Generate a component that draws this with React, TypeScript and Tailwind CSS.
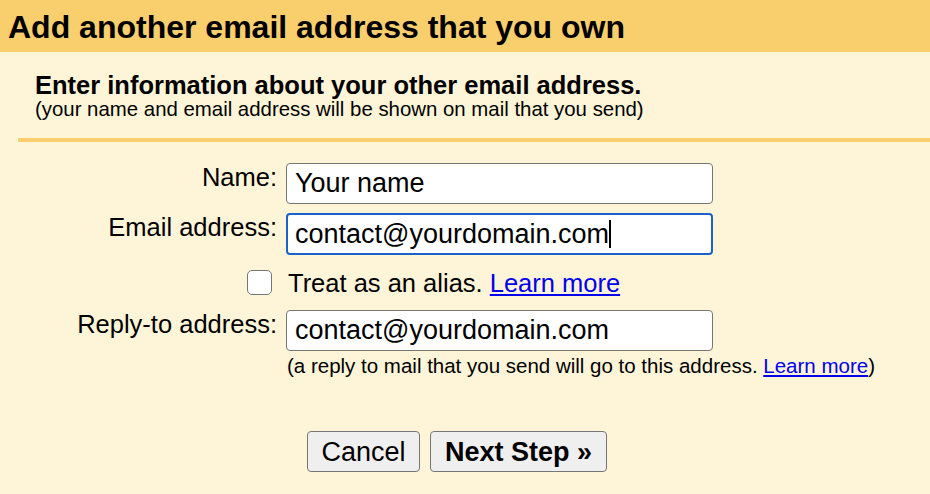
import React from 'react';

const labelCls = 'text-right text-[25.5px] leading-[28px] text-black';
const inputCls =
  'w-[427px] h-[41px] bg-white border-[1.5px] border-[#767676] rounded-[4px] px-[8px] text-[27px] text-black outline-none';

function Field({ label, value }: { label: string; value: string }) {
  return (
    <>
      <div className={labelCls}>{label}</div>
      <input readOnly className={inputCls} value={value} />
    </>
  );
}

export default function App() {
  return (
    <div className="w-[930px] h-[494px] bg-[#fef5d8] font-['Liberation_Sans',Arial,sans-serif] text-black overflow-hidden">
      <div className="h-[52px] bg-[#f9cf6d] pl-[8px] flex items-center">
        <h1 className="text-[32px] font-bold leading-none pt-[2px]">Add another email address that you own</h1>
      </div>

      <div className="pl-[35px] pt-[20px]">
        <div className="text-[25.5px] font-bold leading-[26px]">Enter information about your other email address.</div>
        <div className="text-[20.4px] leading-[22px]">(your name and email address will be shown on mail that you send)</div>
      </div>

      <div className="ml-[18px] mt-[18px] h-[4px] bg-[#f9cf6d]" />

      <div className="grid grid-cols-[277px_auto] gap-x-[9px] mt-[21px]">
        <Field label="Name:" value="Your name" />

        <div className={`${labelCls} mt-[9px]`}>Email address:</div>
        <div className="mt-[9px] w-[427px] h-[42px] bg-white border-[2.5px] border-[#1a62c9] rounded-[4px] px-[7px] flex items-center text-[27px]">
          <span>contact@yourdomain.com</span>
          <span className="w-[2px] h-[28px] bg-black" />
        </div>

        <div className="mt-[15px] flex justify-end pr-[5px]">
          <span className="w-[25px] h-[25px] bg-white border-[1.5px] border-[#767676] rounded-[5px]" />
        </div>
        <div className="mt-[14px] text-[25.5px] leading-[28px] -ml-[7px] pl-[9px]">
          Treat as an alias.{' '}
          <a href="#" className="text-[#0000ee] underline">Learn more</a>
        </div>

        <div className={`${labelCls} mt-[13px]`}>Reply-to address:</div>
        <div className="mt-[13px]">
          <input readOnly className={inputCls} value="contact@yourdomain.com" />
        </div>

        <div />
        <div className="text-[20.5px] leading-[22px] mt-[4px] pl-[1px]">
          (a reply to mail that you send will go to this address.{' '}
          <a href="#" className="text-[#0000ee] underline">Learn more</a>)
        </div>
      </div>

      <div className="flex gap-[10px] pl-[307px] mt-[54px]">
        <button className="w-[113px] h-[41px] bg-[#efefef] border-[1.5px] border-[#767676] rounded-[4px] text-[27px]">
          Cancel
        </button>
        <button className="w-[177px] h-[41px] bg-[#efefef] border-[1.5px] border-[#767676] rounded-[4px] text-[27px] font-bold">
          Next Step »
        </button>
      </div>
    </div>
  );
}
